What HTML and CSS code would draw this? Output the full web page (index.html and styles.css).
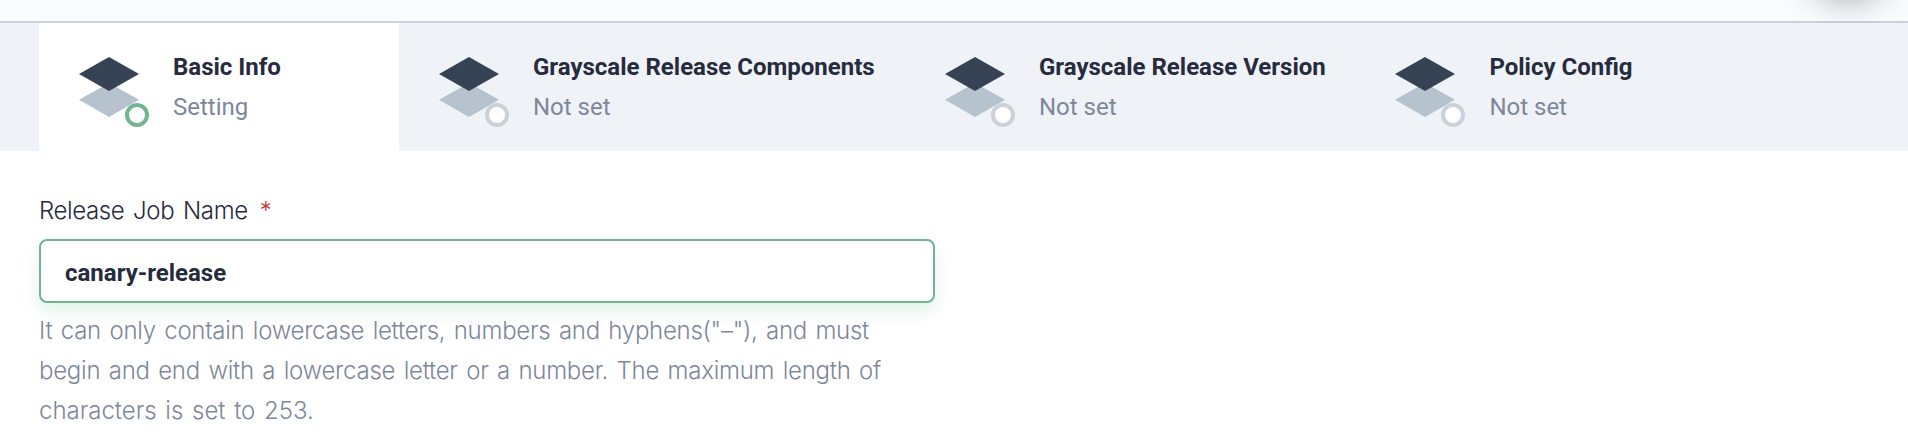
FILE: index.html
```html
<!DOCTYPE html>
<html lang="en">
<head>
<meta charset="utf-8">
<title>Release Job</title>
<link rel="stylesheet" href="styles.css">
</head>
<body>
<svg class="defs" aria-hidden="true">
  <symbol id="layers" viewBox="0 0 60 60">
    <path class="layer-bottom" d="M30 26 60 42.8 30 60 0 42.8Z"/>
    <path class="layer-top" d="M30 0 60 17 30 34 0 17Z"/>
  </symbol>
</svg>
<header class="header"><span class="floating-shadow"></span></header>
<nav class="tabs">
  <div class="tab tab-active">
    <div class="tab-icon"><svg><use href="#layers"/></svg><i class="status"></i></div>
    <div class="tab-text"><div class="tab-title">Basic Info</div><div class="tab-state">Setting</div></div>
  </div>
  <div class="tab tab-components">
    <div class="tab-icon"><svg><use href="#layers"/></svg><i class="status"></i></div>
    <div class="tab-text"><div class="tab-title">Grayscale Release Components</div><div class="tab-state">Not set</div></div>
  </div>
  <div class="tab tab-version">
    <div class="tab-icon"><svg><use href="#layers"/></svg><i class="status"></i></div>
    <div class="tab-text"><div class="tab-title">Grayscale Release Version</div><div class="tab-state">Not set</div></div>
  </div>
  <div class="tab">
    <div class="tab-icon"><svg><use href="#layers"/></svg><i class="status"></i></div>
    <div class="tab-text"><div class="tab-title">Policy Config</div><div class="tab-state">Not set</div></div>
  </div>
</nav>
<main class="form">
  <label class="label" for="name"><span class="label-text">Release Job Name</span><span class="required">*</span></label>
  <input class="input" id="name" type="text" value="canary-release">
  <p class="help"><span class="line line-1">It can only contain lowercase letters, numbers and hyphens("–"), and must</span><span class="line line-2">begin and end with a lowercase letter or a number. The maximum length of</span><span class="line line-3">characters is set to 253.</span></p>
</main>
</body>
</html>
```

FILE: styles.css
```css
* { box-sizing: border-box; }
body {
  margin: 0;
  height: 432px;
  overflow: hidden;
  background: #fff;
  color: #262b3d;
  font-family: Roboto, "Liberation Sans", sans-serif;
  font-size: 24px;
  line-height: 40px;
}
.defs { position: absolute; width: 0; height: 0; }
.layer-bottom { fill: #b6c2cd; }
.layer-top { fill: #364354; }
.header {
  position: relative;
  height: 23px;
  background: #fafbfd;
  border-bottom: 2px solid #ccd3db;
}
.floating-shadow {
  position: absolute;
  top: -80px;
  left: 1808px;
  width: 80px;
  height: 72px;
  border-radius: 40px;
  box-shadow: 0 8px 32px rgba(36, 46, 66, 0.4);
}
.tabs {
  position: relative;
  display: flex;
  height: 128px;
  padding-left: 39px;
  background: #eff3f8;
}
.tab {
  display: flex;
  flex: none;
  gap: 24px;
  width: 360px;
  padding: 24px 0 24px 30px;
}
.tab-active { background: #fff; }
.tab-components { width: 506px; }
.tab-version { width: 450.4px; }
.tab-icon { position: relative; width: 80px; height: 80px; padding: 10px; }
.tab-icon svg { display: block; width: 60px; height: 60px; }
.status {
  position: absolute;
  right: 0;
  bottom: 0;
  width: 24px;
  height: 24px;
  border: 4px solid #ccd1d9;
  border-radius: 50%;
  background: #fff;
}
.tab-active .status { border-color: #73b58f; }
.tab-text { white-space: nowrap; }
.tab-title { font-weight: 700; }
.tab-state { color: #7e879a; }
.form { display: flex; flex-direction: column; width: 935px; padding: 40px 0 0 39px; }
.label, .help { font-family: Inter, "Liberation Sans", sans-serif; font-weight: 300; }
.label { display: flex; gap: 12px; }
.label-text { word-spacing: 2.5px; letter-spacing: -0.4px; }
.required { color: #bd3633; }
.input {
  height: 64px;
  margin: 8px 0 8px;
  padding: 4px 24px 0;
  border: 2px solid #73b394;
  border-radius: 8px;
  outline: none;
  background: #fff;
  box-shadow: 0 8px 16px rgba(85, 188, 138, 0.18);
  color: #262b3d;
  font: 700 24px Roboto, sans-serif;
}
.help { margin: 0; color: #7e879a; }
.line { display: block; white-space: nowrap; word-spacing: 2px; }
.line-1 { letter-spacing: -0.27px; }
.line-2 { letter-spacing: -0.26px; }
.line-3 { letter-spacing: -0.02px; }
```
